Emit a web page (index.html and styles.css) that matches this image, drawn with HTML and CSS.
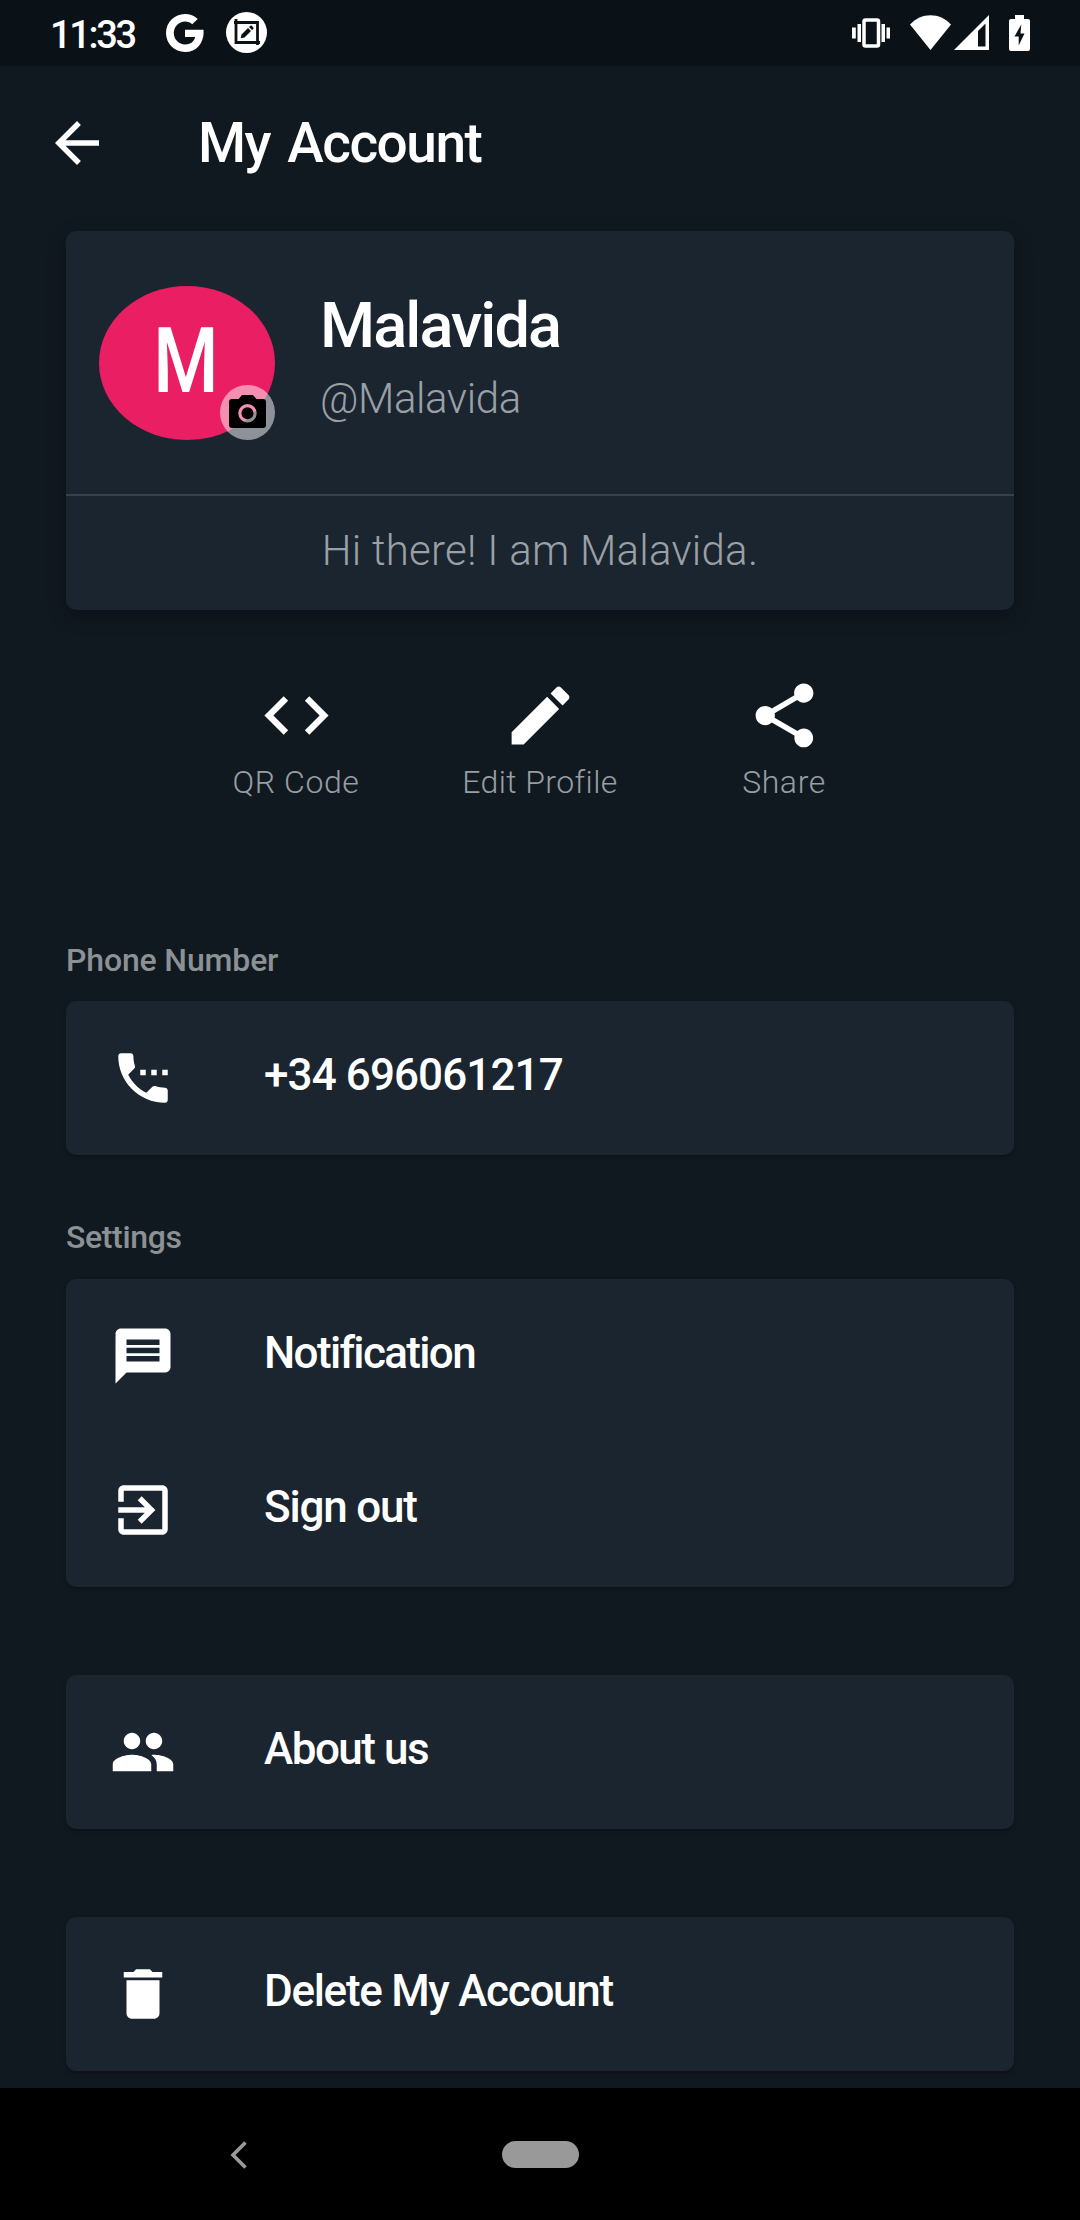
FILE: index.html
```html
<!DOCTYPE html>
<html lang="en">
<head>
<meta charset="utf-8">
<title>My Account</title>
<link rel="stylesheet" href="styles.css">
</head>
<body>
<div class="screen">
  <header class="status">
    <span class="time">11:33</span>
    <svg class="google" viewBox="0 0 38 38"><path d="M19 0C24 0 28.300 1.800 31.700 4.900L26.200 10.300C24.300 8.500 21.900 7.500 19 7.500C12.900 7.500 7.800 12.700 7.800 19C7.800 25.300 12.900 30.500 19 30.500C24.600 30.500 28.300 27.500 29.200 23H19V15.800H37.500C38.600 27.500 31.500 38 19 38C8.500 38 0 29.500 0 19S8.500 0 19 0Z" fill="#fff"/></svg>
    <svg class="capture" viewBox="0 0 41 41"><circle cx="20.500" cy="20.500" r="20.500" fill="#fff"/><g fill="none" stroke="#0b1217" stroke-width="2.800"><path d="M10 7V30.500H34M8 10.500H31.500V33"/></g><path d="M15.500 22.500L22 16l3 3-6.500 6.500-3.800.8zM23 15l1.500-1.300c.7-.7 3.700 2 3 3L26 18z" fill="#0b1217"/></svg>
    <span class="spacer"></span>
    <svg class="vibrate" viewBox="0 0 38 30"><rect x="12" y="2" width="14.500" height="26" rx="1.500" fill="none" stroke="#fff" stroke-width="3.500"/><path d="M0 9.500h3.800v11H0zM5.500 6h3.500v18H5.500zM29.500 6H33v18h-3.500zM34.500 9.500H38v11h-3.500z" fill="#fff"/></svg>
    <svg class="wifi" viewBox="0 0 41 35"><path d="M0 9.500C11-3 30-3 41 9.500L20.500 35z" fill="#fff"/></svg>
    <svg class="signal" viewBox="0 0 35 35"><path d="M35 0V35H0zM31.500 8.500L24 16V31.500H31.500z" fill="#fff" fill-rule="evenodd"/></svg>
    <svg class="battery" viewBox="0 0 21 36"><path d="M6 0h9v4h4a2 2 0 0 1 2 2v28a2 2 0 0 1-2 2H2a2 2 0 0 1-2-2V6a2 2 0 0 1 2-2h4zM12.300 9.500L5.500 21.500h4.200V30.500L15.500 18.500h-4z" fill="#fff" fill-rule="evenodd"/></svg>
  </header>

  <div class="appbar">
    <svg class="icon" viewBox="0 0 24 24"><path d="M20 11H7.830l5.590-5.590L12 4l-8 8 8 8 1.410-1.410L7.830 13H20v-2z"/></svg>
    <h1 class="title">My Account</h1>
  </div>

  <main class="content">
    <section class="card profile">
      <div class="identity">
        <div class="avatar">
          <span class="initial">M</span>
          <div class="badge"><svg viewBox="0 0 37 33"><path d="M13 0h11l3.400 4H34a3 3 0 0 1 3 3v23a3 3 0 0 1-3 3H3a3 3 0 0 1-3-3V7a3 3 0 0 1 3-3h6.600zM18.500 9a9.200 9.200 0 1 0 0 18.400 9.200 9.200 0 1 0 0-18.400z" fill-rule="evenodd"/><circle cx="18.500" cy="18.200" r="6"/></svg></div>
        </div>
        <div class="names">
          <div class="name">Malavida</div>
          <div class="handle">@Malavida</div>
        </div>
      </div>
      <p class="bio">Hi there! I am Malavida.</p>
    </section>

    <nav class="actions">
      <div class="action"><svg class="icon-lg" viewBox="0 0 24 24"><path d="M9.400 16.600L4.800 12l4.600-4.600L8 6l-6 6 6 6 1.400-1.400zm5.200 0l4.600-4.600-4.600-4.600L16 6l6 6-6 6-1.400-1.400z"/></svg><span class="action-label">QR Code</span></div>
      <div class="action"><svg class="icon-lg" viewBox="0 0 24 24"><path d="M3 17.250V21h3.750L17.810 9.940l-3.750-3.750L3 17.250zM20.710 7.040c.39-.39.39-1.020 0-1.410l-2.340-2.340c-.39-.39-1.020-.39-1.410 0l-1.830 1.830 3.750 3.750 1.830-1.830z"/></svg><span class="action-label edit">Edit Profile</span></div>
      <div class="action"><svg class="icon-lg" viewBox="0 0 24 24"><path d="M18 16.080c-.76 0-1.440.3-1.960.77L8.910 12.700c.05-.23.09-.46.09-.7s-.04-.47-.09-.7l7.050-4.110c.54.5 1.250.81 2.040.81 1.660 0 3-1.340 3-3s-1.340-3-3-3-3 1.340-3 3c0 .24.04.47.09.7L8.040 9.810C7.500 9.310 6.790 9 6 9c-1.660 0-3 1.340-3 3s1.340 3 3 3c.79 0 1.500-.31 2.040-.81l7.120 4.160c-.05.21-.08.43-.08.65 0 1.610 1.310 2.920 2.920 2.920 1.610 0 2.920-1.310 2.920-2.920s-1.310-2.920-2.920-2.920z"/></svg><span class="action-label">Share</span></div>
    </nav>

    <h2 class="heading phone-heading">Phone Number</h2>
    <section class="card">
      <div class="row"><svg class="icon" viewBox="0 0 24 24"><path d="M11 9h2v2h-2zm4 0h2v2h-2zm5 6.500c-1.250 0-2.450-.2-3.570-.57-.35-.11-.74-.03-1.020.24l-2.200 2.200c-2.830-1.440-5.150-3.750-6.590-6.580l2.200-2.210c.28-.27.36-.66.25-1.010C8.700 6.450 8.500 5.250 8.500 4c0-.55-.45-1-1-1H4c-.55 0-1 .45-1 1 0 9.390 7.610 17 17 17 .55 0 1-.45 1-1v-3.500c0-.55-.45-1-1-1zM19 9v2h2V9h-2z"/></svg><span class="label number">+34 696061217</span></div>
    </section>

    <h2 class="heading settings-heading">Settings</h2>
    <section class="card">
      <div class="row"><svg class="icon" viewBox="0 0 24 24"><path d="M20 2H4c-1.100 0-1.990.9-1.990 2L2 22l4-4h14c1.100 0 2-.9 2-2V4c0-1.100-.9-2-2-2zm-2 12H6v-2h12v2zm0-3H6V9h12v2zm0-3H6V6h12v2z"/></svg><span class="label notification">Notification</span></div>
      <div class="row"><svg class="icon" viewBox="0 0 24 24"><path d="M10.090 15.590L11.500 17l5-5-5-5-1.410 1.410L12.670 11H3v2h9.670l-2.580 2.590zM19 3H5c-1.110 0-2 .9-2 2v4h2V5h14v14H5v-4H3v4c0 1.100.89 2 2 2h14c1.100 0 2-.9 2-2V5c0-1.100-.9-2-2-2z"/></svg><span class="label signout">Sign out</span></div>
    </section>

    <section class="card spaced">
      <div class="row"><svg class="icon" viewBox="0 0 24 24"><path d="M16 11c1.660 0 2.990-1.340 2.990-3S17.660 5 16 5c-1.660 0-3 1.340-3 3s1.340 3 3 3zm-8 0c1.660 0 2.990-1.340 2.990-3S9.660 5 8 5C6.340 5 5 6.340 5 8s1.340 3 3 3zm0 2c-2.330 0-7 1.170-7 3.500V19h14v-2.500c0-2.330-4.670-3.500-7-3.500zm8 0c-.29 0-.62.02-.97.05 1.160.84 1.970 1.970 1.970 3.450V19h6v-2.500c0-2.330-4.670-3.500-7-3.500z"/></svg><span class="label about">About us</span></div>
    </section>

    <section class="card spaced">
      <div class="row"><svg class="icon" viewBox="0 0 24 24"><path d="M6 19c0 1.100.9 2 2 2h8c1.100 0 2-.9 2-2V7H6v12zM19 4h-3.500l-1-1h-5l-1 1H5v2h14V4z"/></svg><span class="label delete">Delete My Account</span></div>
    </section>
  </main>

  <footer class="navbar">
    <svg class="nav-back" viewBox="0 0 17 28"><path d="M15.500 1.500L3 14l12.500 12.500" fill="none" stroke="#999" stroke-width="3.600"/></svg>
    <span class="nav-home"></span>
  </footer>
</div>
</body>
</html>
```
FILE: styles.css
```css
* { box-sizing: border-box; }
body { margin: 0; background: #111920; font-family: Roboto, "Liberation Sans", sans-serif; color: #fff; }
svg { display: block; flex: none; }
h1, h2, p { margin: 0; }
.screen { width: 1080px; height: 2220px; display: flex; flex-direction: column; overflow: hidden; background: #111920; white-space: nowrap; }

.status { height: 66px; flex: none; display: flex; align-items: flex-start; padding: 0 50px; background: #0b1217; }
.time { width: 116px; font-size: 38px; font-weight: 500; line-height: 70px; letter-spacing: -2.3px; }
.google { width: 38px; height: 38px; margin-top: 14px; }
.capture { width: 41px; height: 41px; margin: 12px 0 0 22px; }
.spacer { flex: 1; }
.vibrate { width: 38px; height: 30px; margin: 18px 20px 0 0; }
.wifi { width: 41px; height: 35px; margin: 15px 3px 0 0; }
.signal { width: 35px; height: 35px; margin: 15px 20px 0 0; }
.battery { width: 21px; height: 36px; margin-top: 15px; }

.icon { width: 66px; height: 66px; fill: #fff; flex: none; }
.icon-lg { width: 77px; height: 77px; fill: #fff; }

.appbar { height: 165px; flex: none; display: flex; align-items: flex-start; padding: 44px 44px 0; }
.title { margin-left: 88px; font-size: 55px; font-weight: 500; line-height: 66px; letter-spacing: -1.5px; word-spacing: 5px; }

.content { flex: 1; padding: 0 66px; }
.card { background: #1a2530; border-radius: 10px; box-shadow: 0 2px 4px rgba(0, 0, 0, .35); }
.profile { height: 379px; box-shadow: 0 6px 18px rgba(0, 0, 0, .35); }
.identity { height: 265px; display: flex; align-items: flex-start; padding: 55px 33px 0; border-bottom: 2px solid #36414c; }
.avatar { position: relative; width: 176px; height: 154px; border-radius: 50%; background: #e91e63; display: flex; justify-content: center; }
.initial { margin-right: 3px; font-size: 91px; font-weight: 500; line-height: 150px; transform: scaleX(.82); }
.badge { position: absolute; right: 0; bottom: 0; width: 55px; height: 55px; border-radius: 50%; background: rgba(255, 255, 255, .5); display: flex; justify-content: center; padding-top: 10px; }
.badge svg { width: 37px; height: 33px; fill: #000; }
.names { margin-left: 45px; padding-top: 3px; }
.name { font-size: 63px; font-weight: 500; line-height: 74px; letter-spacing: -1.9px; }
.handle { margin-top: 11px; font-size: 42px; font-weight: 300; line-height: 50px; letter-spacing: -.4px; color: #9aa0a6; }
.bio { font-size: 42px; font-weight: 300; line-height: 109px; letter-spacing: .25px; text-align: center; color: #9aa0a6; }

.actions { display: flex; justify-content: center; margin-top: 67px; height: 263px; }
.action { width: 244px; display: flex; flex-direction: column; align-items: center; }
.action-label { margin-top: 8px; font-size: 32px; font-weight: 300; line-height: 40px; letter-spacing: .6px; color: #989ea2; }
.edit { letter-spacing: .4px; }

.heading { font-size: 32px; font-weight: 500; line-height: 40px; letter-spacing: -.15px; color: #8b9195; }
.phone-heading { height: 61px; }
.settings-heading { margin-top: 62px; height: 62px; letter-spacing: -.35px; }
.row { height: 154px; display: flex; align-items: center; padding: 0 44px; }
.label { margin-left: 88px; padding-bottom: 7px; font-size: 44px; font-weight: 500; line-height: 52px; }
.number { letter-spacing: -.9px; }
.notification { letter-spacing: -1.65px; }
.signout { letter-spacing: -1.2px; }
.about { letter-spacing: -1.5px; }
.delete { letter-spacing: -1.3px; }
.spaced { margin-top: 88px; }

.navbar { height: 132px; flex: none; display: flex; align-items: flex-start; background: #000; padding: 53px 0 0 230px; }
.nav-back { width: 17px; height: 28px; }
.nav-home { margin-left: 255px; width: 77px; height: 27px; border-radius: 14px; background: #999; }
```
